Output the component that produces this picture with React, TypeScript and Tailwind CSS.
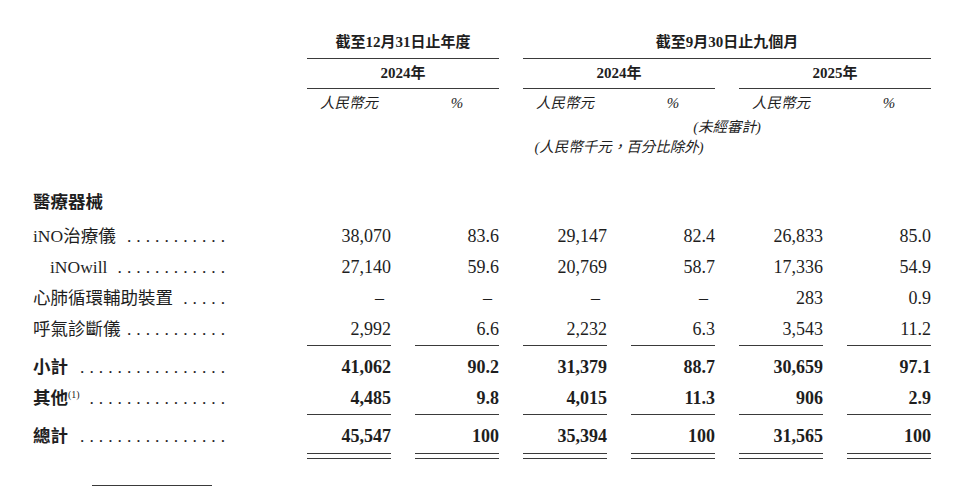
import React from "react";

const grid =
  "grid grid-cols-[283px_84px_84px_84px_84px_84px_84px] gap-x-[24px]";

type Row = {
  label: string;
  vals: string[];
  dots: number;
  indent?: boolean;
  sup?: string;
};

const ItemRows: Row[] = [
  { label: "iNO治療儀", dots: 11, vals: ["38,070", "83.6", "29,147", "82.4", "26,833", "85.0"] },
  { label: "iNOwill", dots: 12, indent: true, vals: ["27,140", "59.6", "20,769", "58.7", "17,336", "54.9"] },
  { label: "心肺循環輔助裝置", dots: 5, vals: ["–", "–", "–", "–", "283", "0.9"] },
  { label: "呼氣診斷儀", dots: 11, vals: ["2,992", "6.6", "2,232", "6.3", "3,543", "11.2"] },
];

const Label: React.FC<{ row: Row; bold?: boolean }> = ({ row, bold }) => (
  <div
    className={`flex h-[31px] items-center pl-[33px] pr-[53px] text-[17.5px] ${
      bold ? "font-bold" : ""
    }`}
  >
    <span className={`whitespace-nowrap ${row.indent ? "pl-[17px]" : ""}`}>
      {row.label}
      {row.sup && <sup className="-top-[6px] text-[10px] font-normal">{row.sup}</sup>}
    </span>
    <span className="ml-auto whitespace-nowrap font-normal tracking-[5px]">
      {".".repeat(row.dots)}
    </span>
  </div>
);

const Cell: React.FC<{ v: string; bold?: boolean; line?: "single" | "double" }> = ({
  v,
  bold,
  line,
}) => {
  const text = (
    <div
      className={`flex h-[31px] items-center justify-end text-[18px] ${
        bold ? "font-bold" : ""
      } ${v === "–" ? "pr-[7px]" : ""}`}
    >
      {v}
    </div>
  );
  if (line === "single") return <div className="border-b border-[#3a3a3a]">{text}</div>;
  if (line === "double")
    return (
      <div className="border-b border-[#3a3a3a] pb-[4px]">
        <div className="border-b border-[#3a3a3a] pb-[1px]">{text}</div>
      </div>
    );
  return text;
};

export default function App() {
  return (
    <div className="h-[500px] w-[960px] bg-white pt-[32px] font-['Liberation_Serif','Noto_Sans_CJK_TC',serif] text-[#1e1e1e]">
      {/* period headers */}
      <div className={grid}>
        <div />
        <div className="col-span-2 border-b border-[#3a3a3a] pb-[6px] text-center text-[15px] font-bold leading-[20px]">
          截至12月31日止年度
        </div>
        <div className="col-span-4 border-b border-[#3a3a3a] pb-[6px] text-center text-[15px] font-bold leading-[20px]">
          截至9月30日止九個月
        </div>
      </div>
      <div className={grid}>
        <div />
        <div className="col-span-2 border-b border-[#3a3a3a] pb-[5px] pt-[4px] text-center text-[15px] font-bold leading-[20px]">
          2024年
        </div>
        <div className="col-span-2 border-b border-[#3a3a3a] pb-[5px] pt-[4px] text-center text-[15px] font-bold leading-[20px]">
          2024年
        </div>
        <div className="col-span-2 border-b border-[#3a3a3a] pb-[5px] pt-[4px] text-center text-[15px] font-bold leading-[20px]">
          2025年
        </div>
      </div>
      <div className={`${grid} pt-[4px] text-[14.5px] italic leading-[20px]`}>
        <div />
        {[0, 1, 2].map((i) => (
          <React.Fragment key={i}>
            <div className="text-center">人民幣元</div>
            <div className="text-center text-[15px]">%</div>
          </React.Fragment>
        ))}
      </div>
      <div className={`${grid} mt-[5px] text-[14.5px] italic leading-[19px]`}>
        <div />
        <div className="col-span-2" />
        <div className="col-span-4 text-center">(未經審計)</div>
      </div>
      <div className={`${grid} mt-[1px] text-[14.5px] italic leading-[19px]`}>
        <div />
        <div className="col-span-6 text-center">(人民幣千元，百分比除外)</div>
      </div>

      {/* body */}
      <div className="mt-[30px] flex h-[31px] items-center pl-[33px] text-[17.5px] font-bold">
        醫療器械
      </div>
      <div className="mt-[3px]">
        {ItemRows.map((r, i) => (
          <div key={r.label} className={grid}>
            <Label row={r} />
            {r.vals.map((v, j) => (
              <Cell key={j} v={v} line={i === ItemRows.length - 1 ? "single" : undefined} />
            ))}
          </div>
        ))}
      </div>
      <div className={`${grid} mt-[6px]`}>
        <Label row={{ label: "小計", dots: 16, vals: [] }} bold />
        {["41,062", "90.2", "31,379", "88.7", "30,659", "97.1"].map((v, j) => (
          <Cell key={j} v={v} bold />
        ))}
      </div>
      <div className={grid}>
        <Label row={{ label: "其他", sup: "(1)", dots: 15, vals: [] }} bold />
        {["4,485", "9.8", "4,015", "11.3", "906", "2.9"].map((v, j) => (
          <Cell key={j} v={v} bold line="single" />
        ))}
      </div>
      <div className={`${grid} mt-[6px]`}>
        <Label row={{ label: "總計", dots: 16, vals: [] }} bold />
        {["45,547", "100", "35,394", "100", "31,565", "100"].map((v, j) => (
          <Cell key={j} v={v} bold line="double" />
        ))}
      </div>

      <div className="ml-[92px] mt-[26px] w-[120px] border-t border-[#3a3a3a]" />
    </div>
  );
}
